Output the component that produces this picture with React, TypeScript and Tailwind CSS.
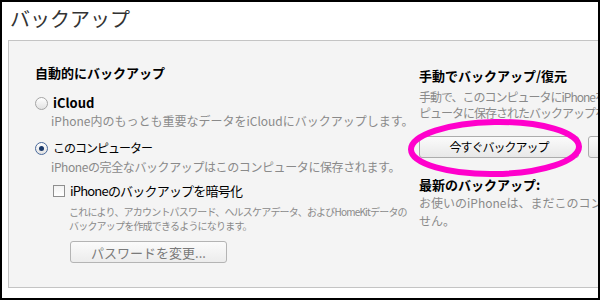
const jp = "font-['Noto_Sans_CJK_JP','Noto_Sans',sans-serif]";

const Radio = ({ checked }: { checked?: boolean }) => (
  <span
    className={`flex h-[13px] w-[13px] shrink-0 items-center justify-center rounded-full border bg-linear-to-b from-white to-[#e2e2e2] ${
      checked ? "border-[#4a6a9c]" : "border-[#a4a4a4]"
    }`}
  >
    {checked && <span className="h-[5px] w-[5px] rounded-full bg-[#1b3a6b]" />}
  </span>
);

const Checkbox = () => (
  <span className="h-[12px] w-[12px] shrink-0 border border-[#8e8e8e] bg-linear-to-b from-[#f2f2f2] to-white" />
);

const App = () => {
  return (
    <div className={`relative h-[300px] w-[600px] overflow-hidden border-2 border-black bg-white ${jp}`}>
      <h1 className="h-[38px] pl-[8px] pt-[5px] text-[20px] leading-[24px] text-[#333]">
        バックアップ
      </h1>

      <div className="ml-[6px] flex h-[248px] w-[640px] border border-[#c4c4c4] bg-[#f4f4f4]">
        {/* left column */}
        <div className="flex w-[410px] shrink-0 flex-col pl-[26px] pt-[23px]">
          <div className="text-[13px] font-bold leading-[18px] text-black">自動的にバックアップ</div>

          <div className="mt-[12px] flex h-[18px] items-center gap-[5px]">
            <Radio />
            <span className="text-[13px] font-semibold text-black">iCloud</span>
          </div>
          <div className="ml-[16px] h-[18px] whitespace-nowrap text-[12px] leading-[18px] text-[#8a8a8a]">
            iPhone内のもっとも重要なデータをiCloudにバックアップします。
          </div>

          <div className="mt-[9px] flex h-[18px] items-center gap-[5px]">
            <Radio checked />
            <span className="text-[12px] tracking-[-1px] text-black">このコンピューター</span>
          </div>
          <div className="ml-[16px] mt-[1px] h-[18px] whitespace-nowrap text-[12px] leading-[18px] tracking-[-0.4px] text-[#8a8a8a]">
            iPhoneの完全なバックアップはこのコンピュータに保存されます。
          </div>

          <div className="ml-[18px] mt-[6px] flex h-[18px] items-center gap-[5px]">
            <Checkbox />
            <span className="text-[13px] tracking-[-0.8px] text-black">iPhoneのバックアップを暗号化</span>
          </div>
          <div className="ml-[34px] mt-[5px] whitespace-nowrap text-[10px] leading-[14px] tracking-[-0.8px] text-[#8a8a8a]">
            <div>これにより、アカウントパスワード、ヘルスケアデータ、およびHomeKitデータの</div>
            <div>バックアップを作成できるようになります。</div>
          </div>
          <button className="ml-[35px] mt-[8px] h-[22px] w-[157px] rounded-[3px] border border-[#b4b4b4] bg-linear-to-b from-[#fbfbfb] to-[#ececec] text-[13px] leading-none text-[#7a7a7a]">
            パスワードを変更...
          </button>
        </div>

        {/* right column */}
        <div className="flex flex-1 flex-col pt-[26px]">
          <div className="text-[13px] font-bold leading-[18px] text-black">手動でバックアップ/復元</div>
          <div className="mt-[4px] whitespace-nowrap text-[12px] leading-[16px] tracking-[-1px] text-[#8a8a8a]">
            <div>手動で、このコンピュータにiPhoneをバックアップしたり、このコン</div>
            <div>ピュータに保存されたバックアップを復元したりします。</div>
          </div>
          <div className="mt-[15px] flex gap-[9px]">
            <button className="h-[22px] w-[160px] rounded-[3px] border border-[#acacac] bg-linear-to-b from-[#fbfbfb] to-[#e8e8e8] text-[12px] leading-none tracking-[-1px] text-black">
              今すぐバックアップ
            </button>
            <button className="h-[22px] w-[160px] rounded-[3px] border border-[#acacac] bg-linear-to-b from-[#fbfbfb] to-[#e8e8e8] text-[12px] leading-none text-black">
              バックアップを復元...
            </button>
          </div>
          <div className="mt-[18px] text-[13px] font-bold leading-[18px] text-black">最新のバックアップ:</div>
          <div className="whitespace-nowrap text-[12px] leading-[18px] text-[#8a8a8a]">
            <div>お使いのiPhoneは、まだこのコンピュータにバックアップされていま</div>
            <div>せん。</div>
          </div>
        </div>
      </div>

      {/* magenta highlight */}
      <svg
        className="pointer-events-none absolute left-[402px] top-[113px]"
        width="182"
        height="66"
        viewBox="0 0 182 66"
      >
        <ellipse
          cx="91"
          cy="33"
          rx="84"
          ry="26"
          fill="none"
          stroke="#ff00cc"
          strokeWidth="6"
          transform="rotate(-1 91 33)"
        />
      </svg>
    </div>
  );
};

export default App;
